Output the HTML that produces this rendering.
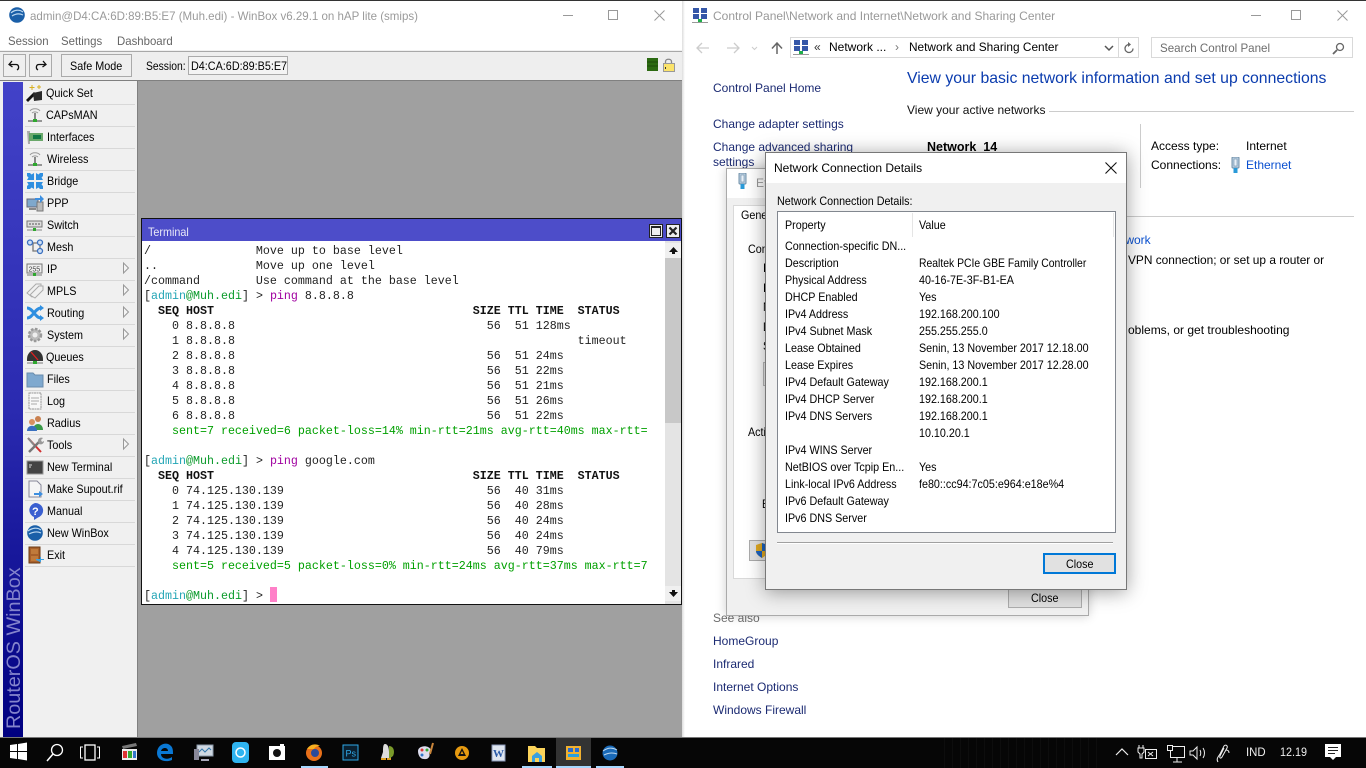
<!DOCTYPE html>
<html><head><meta charset="utf-8"><title>WinBox and Network and Sharing Center</title>
<style>
html,body{margin:0;padding:0;width:1366px;height:768px;overflow:hidden;background:#fff}
body{position:relative;font-family:"Liberation Sans",sans-serif;font-size:12px;color:#000}
.a{position:absolute}
.t{position:absolute;line-height:14px;white-space:nowrap;font-size:12px}
.n{transform:scaleX(.9);transform-origin:0 50%}
.mn{transform:scaleX(.95);transform-origin:0 50%}
.l{color:#1b2a72}
.d{transform:scaleX(.895);transform-origin:0 50%}
.a svg,svg.a{display:block}
.btn{position:absolute;box-sizing:border-box;border:1px solid #aaa;background:#efefef}
.sep{position:absolute;left:25px;width:110px;height:1px;background:#d8d8d8}
pre{margin:0;font-family:"Liberation Mono",monospace;font-size:11.667px;line-height:15px;color:#222}
.g{color:#00a000}.c{color:#22a5b5}.m{color:#a000a0}.e{color:#0a9a2a}.h{font-weight:bold;color:#111}
</style></head><body>

<!-- WINBOX WINDOW -->
<div class="a" style="left:0;top:0;width:1366px;height:1px;background:#333"></div>
<div class="a" style="left:0;top:1px;width:683px;height:49px;background:#fff"></div>
<svg class="a" style="left:9px;top:7px" width="16" height="16" viewBox="0 0 16 16"><circle cx="8" cy="8" r="7.8" fill="#1a5fa8"/><path d="M2 6c3-3 8-4 12-1M3 9c3-2 7-3 11-1" stroke="#bcd8f0" stroke-width="1.2" fill="none"/></svg>
<div class="t" style="left:30px;top:9px;color:#9a9a9a;transform:scaleX(.96);transform-origin:0 50%">admin@D4:CA:6D:89:B5:E7 (Muh.edi) - WinBox v6.29.1 on hAP lite (smips)</div>
<div class="a" style="left:563px;top:15px;width:10px;height:1px;background:#999"></div>
<div class="a" style="left:608px;top:10px;width:8px;height:8px;border:1px solid #999"></div>
<svg class="a" style="left:654px;top:10px" width="11" height="11"><path d="M.5.5l10 10M10.5.5l-10 10" stroke="#999"/></svg>
<div class="t mn" style="left:8px;top:34px;color:#666">Session</div>
<div class="t mn" style="left:61px;top:34px;color:#666">Settings</div>
<div class="t mn" style="left:117px;top:34px;color:#666">Dashboard</div>

<div class="a" style="left:0;top:50px;width:683px;height:1px;background:#f0f0f0"></div>
<div class="a" style="left:0;top:51px;width:683px;height:1px;background:#a8a8a8"></div>
<div class="a" style="left:0;top:52px;width:683px;height:28px;background:#eeeeee"></div>
<div class="a" style="left:0;top:80px;width:683px;height:1px;background:#808080"></div>

<div class="btn" style="left:3px;top:54px;width:23px;height:23px"></div>
<svg class="a" style="left:8px;top:60px" width="13" height="11" viewBox="0 0 13 11"><path d="M4 1L1 4.5 4.5 7M1.5 4.5H8c3 0 3.5 4 1 5.5" fill="none" stroke="#111" stroke-width="1.3"/></svg>
<div class="btn" style="left:29px;top:54px;width:23px;height:23px"></div>
<svg class="a" style="left:34px;top:60px" width="13" height="11" viewBox="0 0 13 11"><path d="M9 1l3 3.500L8.500 7M11.500 4.500H5c-3 0-3.500 4-1 5.500" fill="none" stroke="#111" stroke-width="1.3"/></svg>
<div class="btn" style="left:61px;top:54px;width:71px;height:23px"></div>
<div class="t n" style="left:70px;top:59px">Safe Mode</div>
<div class="t" style="left:146px;top:59px;transform:scaleX(.86);transform-origin:0 50%">Session:</div>
<div class="btn" style="left:188px;top:56px;width:100px;height:19px;background:#f4f4f4"></div>
<div class="t n" style="left:191px;top:59px">D4:CA:6D:89:B5:E7</div>
<svg class="a" style="left:647px;top:58px" width="30" height="14"><rect x="0" y="0" width="11" height="13" fill="#2c6a12"/><path d="M0 4h11M0 8h11" stroke="#1c4a0a"/><path d="M18.500 6V3.500c0-3 6-3 6 0V6" fill="none" stroke="#888" stroke-width="1.300"/><rect x="16.500" y="5.500" width="11" height="8" fill="#fbe36a" stroke="#999"/><rect x="18" y="9" width="1" height="2" fill="#333"/></svg>

<!-- sidebar -->
<div class="a" style="left:0;top:81px;width:138px;height:656px;background:#f0f0f0"></div>
<div class="a" style="left:137px;top:81px;width:1px;height:656px;background:#808080"></div>
<div class="a" style="left:3px;top:82px;width:20px;height:655px;background:linear-gradient(#4242c8,#2a2ab0 50%,#000080)"></div>
<div class="a" style="left:3px;top:82px;width:20px;height:650px;overflow:hidden">
 <div style="position:absolute;left:1px;bottom:3px;transform-origin:0 100%;transform:translateX(21px) rotate(-90deg);white-space:nowrap;font-size:19.800px;line-height:22px;color:#8484cc">RouterOS WinBox</div>
</div>

<div class="t n" style="left:46px;top:86px">Quick Set</div><div class="sep" style="top:104px"></div>
<div class="t n" style="left:46px;top:108px">CAPsMAN</div><div class="sep" style="top:126px"></div>
<div class="t n" style="left:47px;top:130px">Interfaces</div><div class="sep" style="top:148px"></div>
<div class="t n" style="left:47px;top:152px">Wireless</div><div class="sep" style="top:170px"></div>
<div class="t n" style="left:47px;top:174px">Bridge</div><div class="sep" style="top:192px"></div>
<div class="t n" style="left:47px;top:196px">PPP</div><div class="sep" style="top:214px"></div>
<div class="t n" style="left:47px;top:218px">Switch</div><div class="sep" style="top:236px"></div>
<div class="t n" style="left:47px;top:240px">Mesh</div><div class="sep" style="top:258px"></div>
<div class="t n" style="left:47px;top:262px">IP</div><div class="sep" style="top:280px"></div>
<div class="t n" style="left:47px;top:284px">MPLS</div><div class="sep" style="top:302px"></div>
<div class="t n" style="left:47px;top:306px">Routing</div><div class="sep" style="top:324px"></div>
<div class="t n" style="left:47px;top:328px">System</div><div class="sep" style="top:346px"></div>
<div class="t n" style="left:46px;top:350px">Queues</div><div class="sep" style="top:368px"></div>
<div class="t n" style="left:47px;top:372px">Files</div><div class="sep" style="top:390px"></div>
<div class="t n" style="left:47px;top:394px">Log</div><div class="sep" style="top:412px"></div>
<div class="t n" style="left:47px;top:416px">Radius</div><div class="sep" style="top:434px"></div>
<div class="t n" style="left:47px;top:438px">Tools</div><div class="sep" style="top:456px"></div>
<div class="t n" style="left:47px;top:460px">New Terminal</div><div class="sep" style="top:478px"></div>
<div class="t n" style="left:47px;top:482px">Make Supout.rif</div><div class="sep" style="top:500px"></div>
<div class="t n" style="left:47px;top:504px">Manual</div><div class="sep" style="top:522px"></div>
<div class="t n" style="left:47px;top:526px">New WinBox</div><div class="sep" style="top:544px"></div>
<div class="t n" style="left:47px;top:548px">Exit</div><div class="sep" style="top:566px"></div>

<svg class="a" style="left:26px;top:84px" width="18" height="484" viewBox="0 0 18 484">
 <!-- quick set --><path d="M1 17L9 9" stroke="#111" stroke-width="2.800"/><path d="M7 9l9-2v9l-8 1z" fill="#2a2a2a"/><path d="M6 1v5M3.500 3.500h5M13 1v4M11 3h4" stroke="#d8b020" stroke-width="1"/>
 <!-- capsman --><g transform="translate(0,22)"><path d="M4 5c2-3 8-3 10 0M6 7c1.500-1.500 4.500-1.500 6 0" stroke="#999" fill="none"/><path d="M9 7v7" stroke="#666" stroke-width="1.500"/><path d="M2 15h14" stroke="#777" stroke-width="1.500"/><rect x="7" y="13" width="4" height="3" fill="#2ea82e"/></g>
 <!-- interfaces --><g transform="translate(0,44)"><path d="M1 3h3v13H2z" fill="#aaa"/><rect x="3" y="5" width="14" height="8" fill="#6aa86a"/><rect x="7" y="7" width="8" height="4" fill="#174"/></g>
 <!-- wireless --><g transform="translate(0,66)"><path d="M4 5c2-3 8-3 10 0M6 7c1.500-1.500 4.500-1.500 6 0" stroke="#999" fill="none"/><path d="M9 7v7" stroke="#666" stroke-width="1.500"/><path d="M2 15h14" stroke="#777" stroke-width="1.500"/><rect x="7" y="13" width="4" height="3" fill="#2ea82e"/></g>
 <!-- bridge --><g transform="translate(1,89)" fill="#2f8fe0"><path d="M0 0h3l1.500 1.500L7 0v7H0l1.500-2.500L0 3z"/><path d="M16 0h-3l-1.500 1.500L9 0v7h7l-1.500-2.500L16 3z"/><path d="M0 16h3l1.500-1.500L7 16V9H0l1.500 2.500L0 13z"/><path d="M16 16h-3l-1.500-1.500L9 16V9h7l-1.500 2.500L16 13z"/></g>
 <!-- ppp --><g transform="translate(0,110)"><rect x="1" y="5" width="11" height="8" fill="#7fa8cc" stroke="#667"/><rect x="11" y="8" width="6" height="9" fill="#bbb" stroke="#777"/><path d="M9 4h5V1l4 4-4 4V6H9z" fill="#3d8fe0"/><path d="M3 15h7" stroke="#888" stroke-width="2"/></g>
 <!-- switch --><g transform="translate(0,132)"><rect x="1" y="5" width="15" height="6" fill="#ddd" stroke="#777"/><path d="M3 8h11" stroke="#555" stroke-dasharray="2 1"/><path d="M1 14h15" stroke="#888"/><rect x="7" y="12" width="3" height="3" fill="#2ea82e"/></g>
 <!-- mesh --><g transform="translate(0,154)" fill="#cfe0f5" stroke="#3a70c0" stroke-width="1.300"><path d="M4 5h10M14 5v8M7 5v8h7" fill="none" stroke="#777"/><circle cx="4" cy="4.500" r="2.500"/><circle cx="14" cy="4.500" r="2.500"/><circle cx="14" cy="13" r="2.500"/></g>
 <!-- ip --><g transform="translate(0,176)"><rect x="1" y="4" width="15" height="9" fill="#eee" stroke="#777"/><text x="2.500" y="11.500" font-size="7" font-family="Liberation Sans" fill="#444">255</text><path d="M1 15h15" stroke="#777"/><rect x="7" y="13" width="3" height="3" fill="#2ea82e"/></g>
 <!-- mpls --><g transform="translate(0,198)" fill="#f0f0f0" stroke="#aaa"><path d="M1 11l9-9h5v4l-9 9z"/><path d="M4 13l9-9h4v4l-8 8z"/></g>
 <!-- routing --><g transform="translate(0,220)" stroke="#2f8fe0" stroke-width="3" fill="none"><path d="M1 14c6 0 8-10 14-10M1 4c6 0 8 10 14 10"/></g><path d="M14 221l4 3-4 3zM14 231l4 3-4 3z" fill="#2f8fe0"/>
 <!-- system --><g transform="translate(0,242)"><circle cx="9" cy="9" r="6" fill="#bbb" stroke="#999" stroke-width="2.500" stroke-dasharray="2.500 1.500"/><circle cx="9" cy="9" r="2.500" fill="#eee"/></g>
 <!-- queues --><g transform="translate(0,264)"><path d="M1 11a8 9 0 0 1 16 0v2H1z" fill="#333"/><path d="M5 4l7 8" stroke="#e02020" stroke-width="1.300"/><path d="M1 15h16" stroke="#777"/><rect x="7" y="13" width="4" height="3" fill="#2ea82e"/></g>
 <!-- files --><g transform="translate(0,286)"><path d="M1 3h6l2 2h8v12H1z" fill="#7fa9cf" stroke="#6a8cac"/></g>
 <!-- log --><g transform="translate(0,308)"><rect x="3" y="1" width="12" height="16" fill="#f8f8f8" stroke="#999" stroke-dasharray="2 .500"/><path d="M5 6h8M5 9h8M5 12h6" stroke="#aaa"/></g>
 <!-- radius --><g transform="translate(0,330)"><circle cx="12" cy="5" r="3" fill="#c98050"/><path d="M7 16c0-8 10-8 10 0z" fill="#3a9a4a"/><circle cx="6" cy="8" r="3" fill="#d89060"/><path d="M1 17c0-7 10-7 10 0z" fill="#3a70c0"/></g>
 <!-- tools --><g transform="translate(0,352)"><path d="M2 2l13 14" stroke="#d03030" stroke-width="2"/><path d="M2 2l6 7" stroke="#888" stroke-width="2"/><path d="M3 16L13 6" stroke="#777" stroke-width="2.500"/><path d="M12 5c0-3 3-4 5-3l-2 2 1 2 2-1c0 3-3 4-5 3z" fill="#999"/></g>
 <!-- new terminal --><g transform="translate(0,374)"><rect x="1" y="3" width="16" height="13" fill="#444" stroke="#999"/><path d="M3 7h3M3 9h2" stroke="#ddd"/></g>
 <!-- supout --><g transform="translate(0,396)"><path d="M3 1h8l4 4v12H3z" fill="#f5f5f5" stroke="#889"/><path d="M8 13h5v-2l4 3-4 3v-2H8z" fill="#3d8fe0"/></g>
 <!-- manual --><g transform="translate(0,418)"><path d="M9 1a8 7.500 0 0 1 3 14.500L8 18v-3A8 7.500 0 0 1 9 1z" fill="#3a5fd0"/><text x="6" y="13" font-size="11" font-weight="bold" font-family="Liberation Sans" fill="#fff">?</text></g>
 <!-- winbox --><g transform="translate(0,440)"><circle cx="9" cy="9" r="7.800" fill="#1a5fa8"/><path d="M2 7c4-3 9-4 13-1M3 10c4-2 8-3 12-1" stroke="#bcd8f0" stroke-width="1.200" fill="none"/></g>
 <!-- exit --><g transform="translate(0,462)"><rect x="3" y="1" width="11" height="16" fill="#a8602a" stroke="#6a3a14"/><rect x="5" y="3" width="7" height="5" fill="#c07a3a"/><rect x="5" y="10" width="7" height="5" fill="#c07a3a"/><path d="M10 13h4v-2h1v2h3v1h-3v2h-1l-4-2z" fill="#3d9fe0"/></g>
</svg>
<svg class="a" style="left:123px;top:262px" width="7" height="192" viewBox="0 0 7 192" fill="#f4f4f4" stroke="#999"><path d="M.5 1v10l5-5zM.5 23v10l5-5zM.5 45v10l5-5zM.5 67v10l5-5zM.5 177v10l5-5z"/></svg>

<!-- work area -->
<div class="a" style="left:138px;top:81px;width:545px;height:656px;background:#a0a0a0"></div>
<div class="a" style="left:682px;top:1px;width:3px;height:737px;background:linear-gradient(90deg,#ddd,#fff)"></div>

<!-- TERMINAL -->
<div class="a" style="left:141px;top:218px;width:541px;height:387px;background:#111"></div>
<div class="a" style="left:142px;top:219px;width:539px;height:22px;background:#4d4dc9"></div>
<div class="t n" style="left:148px;top:225px;color:#e8e8f8">Terminal</div>
<div class="a" style="left:649px;top:224px;width:14px;height:14px;box-sizing:border-box;background:#eee;border:1px solid #222"></div>
<div class="a" style="left:651px;top:226px;width:10px;height:10px;box-sizing:border-box;border:1px solid #222;border-top-width:2px"></div>
<div class="a" style="left:666px;top:224px;width:14px;height:14px;box-sizing:border-box;background:#eee;border:1px solid #222"></div>
<svg class="a" style="left:668px;top:226px" width="10" height="10"><path d="M1.500 1.500l7 7M8.500 1.500l-7 7" stroke="#222" stroke-width="2.200"/></svg>
<div class="a" style="left:142px;top:241px;width:539px;height:363px;background:#fff"></div>
<div class="a" style="left:665px;top:241px;width:16px;height:363px;background:#e4e4e4"></div>
<div class="a" style="left:665px;top:258px;width:16px;height:165px;background:#c8c8c8"></div>
<div class="a" style="left:665px;top:243px;width:16px;height:15px;background:#f0f0f0"></div>
<svg class="a" style="left:669px;top:247px" width="9" height="7"><path d="M4.500 0L9 5H6v2H3V5H0z" fill="#111"/></svg>
<div class="a" style="left:665px;top:586px;width:16px;height:15px;background:#f0f0f0"></div>
<svg class="a" style="left:669px;top:590px" width="9" height="7"><path d="M4.500 7L9 2H6V0H3v2H0z" fill="#111"/></svg>
<div class="a" style="left:143px;top:244px;width:522px;height:359px;overflow:hidden">
<pre style="padding-left:1px">/               Move up to base level
..              Move up one level
/command        Use command at the base level
[<span class="c">admin</span><span class="e">@Muh.edi</span>] &gt; <span class="m">ping</span> 8.8.8.8
<span class="h">  SEQ HOST                                     SIZE TTL TIME  STATUS</span>
    0 8.8.8.8                                    56  51 128ms
    1 8.8.8.8                                                 timeout
    2 8.8.8.8                                    56  51 24ms
    3 8.8.8.8                                    56  51 22ms
    4 8.8.8.8                                    56  51 21ms
    5 8.8.8.8                                    56  51 26ms
    6 8.8.8.8                                    56  51 22ms
<span class="g">    sent=7 received=6 packet-loss=14% min-rtt=21ms avg-rtt=40ms max-rtt=</span>

[<span class="c">admin</span><span class="e">@Muh.edi</span>] &gt; <span class="m">ping</span> google.com
<span class="h">  SEQ HOST                                     SIZE TTL TIME  STATUS</span>
    0 74.125.130.139                             56  40 31ms
    1 74.125.130.139                             56  40 28ms
    2 74.125.130.139                             56  40 24ms
    3 74.125.130.139                             56  40 24ms
    4 74.125.130.139                             56  40 79ms
<span class="g">    sent=5 received=5 packet-loss=0% min-rtt=24ms avg-rtt=37ms max-rtt=7</span>

[<span class="c">admin</span><span class="e">@Muh.edi</span>] &gt; </pre>
</div>
<div class="a" style="left:270px;top:587px;width:7px;height:15px;background:#ff80c8"></div>

<!-- CONTROL PANEL WINDOW -->
<svg class="a" style="left:692px;top:7px" width="16" height="17" viewBox="0 0 16 17"><rect x="1" y="1" width="6" height="5" fill="#3557a8"/><rect x="9" y="1" width="6" height="5" fill="#3557a8"/><rect x="1" y="7" width="6" height="5" fill="#3557a8"/><rect x="9" y="7" width="6" height="5" fill="#3557a8"/><rect x="6" y="12" width="4" height="3" fill="#1fae4a"/><path d="M0 15.500h16" stroke="#999"/></svg>
<div class="t" style="left:713px;top:9px;color:#999">Control Panel\Network and Internet\Network and Sharing Center</div>
<div class="a" style="left:1251px;top:15px;width:10px;height:1px;background:#999"></div>
<div class="a" style="left:1291px;top:10px;width:8px;height:8px;border:1px solid #999"></div>
<svg class="a" style="left:1337px;top:10px" width="11" height="11"><path d="M.5.5l10 10M10.500.5l-10 10" stroke="#999"/></svg>
<svg class="a" style="left:696px;top:42px" width="90" height="12" fill="none"><path d="M1 6h12M6 1L1 6l5 5" stroke="#ccc" stroke-width="1.300"/><path d="M31 6h12M38 1l5 5-5 5" stroke="#ccc" stroke-width="1.300"/><path d="M56 5l2.500 2.500L61 5" stroke="#ccc"/><path d="M81 12V2M76 6.500L81 1l5 5.500" stroke="#666" stroke-width="1.500"/></svg>
<div class="a" style="left:790px;top:37px;width:349px;height:21px;box-sizing:border-box;border:1px solid #d9d9d9"></div>
<svg class="a" style="left:793px;top:39px" width="16" height="17" viewBox="0 0 16 17"><rect x="1" y="1" width="6" height="5" fill="#3557a8"/><rect x="9" y="1" width="6" height="5" fill="#3557a8"/><rect x="1" y="7" width="6" height="5" fill="#3557a8"/><rect x="9" y="7" width="6" height="5" fill="#3557a8"/><rect x="6" y="12" width="4" height="3" fill="#1fae4a"/><path d="M0 15.500h16" stroke="#999"/></svg>
<div class="t" style="left:814px;top:40px;color:#333">«</div>
<div class="t" style="left:829px;top:40px">Network ...</div>
<div class="t" style="left:895px;top:40px;color:#777">›</div>
<div class="t" style="left:909px;top:40px;transform:scaleX(.987);transform-origin:0 50%">Network and Sharing Center</div>
<svg class="a" style="left:1104px;top:45px" width="10" height="7"><path d="M1 1l4 4 4-4" stroke="#555" stroke-width="1.500" fill="none"/></svg>
<div class="a" style="left:1118px;top:38px;width:1px;height:19px;background:#d9d9d9"></div>
<svg class="a" style="left:1123px;top:42px" width="12" height="12"><path d="M6 2.500a4 4 0 1 0 4 4" stroke="#666" stroke-width="1.300" fill="none"/><path d="M5 0l3 2.500L5 5z" fill="#666"/></svg>
<div class="a" style="left:1151px;top:37px;width:202px;height:21px;box-sizing:border-box;border:1px solid #d9d9d9"></div>
<div class="t" style="left:1160px;top:41px;color:#6d6d6d;transform:scaleX(.965);transform-origin:0 50%">Search Control Panel</div>
<svg class="a" style="left:1332px;top:42px" width="13" height="13"><circle cx="8" cy="5" r="3.500" stroke="#666" stroke-width="1.300" fill="none"/><path d="M5 8l-4 4" stroke="#666" stroke-width="1.800"/></svg>

<div class="t" style="left:907px;top:69px;font-size:15.800px;line-height:19px;color:#0b3cae">View your basic network information and set up connections</div>
<div class="t" style="left:907px;top:103px;color:#111">View your active networks</div>
<div class="a" style="left:1049px;top:111px;width:305px;height:1px;background:#ccc"></div>
<div class="t l" style="left:713px;top:81px">Control Panel Home</div>
<div class="t l" style="left:713px;top:117px">Change adapter settings</div>
<div class="t l" style="left:713px;top:140px">Change advanced sharing</div>
<div class="t l" style="left:713px;top:155px">settings</div>
<div class="t" style="left:927px;top:140px;font-weight:bold;font-size:12.500px">Network&nbsp; 14</div>
<div class="a" style="left:1140px;top:124px;width:1px;height:64px;background:#ccc"></div>
<div class="t" style="left:1151px;top:139px">Access type:</div>
<div class="t" style="left:1246px;top:139px">Internet</div>
<div class="t" style="left:1151px;top:158px">Connections:</div>
<svg class="a" style="left:1230px;top:157px" width="11" height="17" viewBox="0 0 11 17"><rect x="2" y="0" width="7" height="11" rx="1" fill="#b8cde0" stroke="#7090a8"/><rect x="4" y="2" width="3" height="7" fill="#e8f0f8" stroke="#7090a8" stroke-width=".6"/><rect x="3.500" y="11" width="4" height="5" fill="#2a9ad8"/></svg>
<div class="t" style="left:1246px;top:158px;color:#0a50d0">Ethernet</div>
<div class="a" style="left:1120px;top:216px;width:234px;height:1px;background:#ccc"></div>
<div class="t" style="left:1122px;top:233px;color:#0a50d0">twork</div>
<div class="t" style="left:1128px;top:253px;transform:scaleX(.99);transform-origin:0 50%">VPN connection; or set up a router or</div>
<div class="t" style="left:1128px;top:323px">oblems, or get troubleshooting</div>
<div class="t" style="left:713px;top:611px;color:#6d6d6d">See also</div>
<div class="t l" style="left:713px;top:634px">HomeGroup</div>
<div class="t l" style="left:713px;top:657px">Infrared</div>
<div class="t l" style="left:713px;top:680px">Internet Options</div>
<div class="t l" style="left:713px;top:703px">Windows Firewall</div>

<!-- ETHERNET STATUS DIALOG -->
<div class="a" style="left:726px;top:168px;width:363px;height:448px;box-sizing:border-box;background:#f0f0f0;border:1px solid #aaa;box-shadow:0 0 10px rgba(0,0,0,.2)"></div>
<div class="a" style="left:727px;top:169px;width:361px;height:29px;background:#fff"></div>
<svg class="a" style="left:737px;top:173px" width="11" height="17" viewBox="0 0 11 17"><rect x="2" y="0" width="7" height="11" rx="1" fill="#b8cde0" stroke="#7090a8"/><rect x="4" y="2" width="3" height="7" fill="#e8f0f8" stroke="#7090a8" stroke-width=".6"/><rect x="3.500" y="11" width="4" height="5" fill="#2a9ad8"/></svg>
<div class="t" style="left:756px;top:176px;color:#999">Et</div>
<div class="a" style="left:733px;top:228px;width:349px;height:351px;box-sizing:border-box;background:#fff;border:1px solid #d9d9d9"></div>
<div class="a" style="left:733px;top:205px;width:45px;height:24px;box-sizing:border-box;background:#fff;border:1px solid #d9d9d9;border-bottom:none"></div>
<div class="t d" style="left:741px;top:208px">Gene</div>
<div class="t d" style="left:748px;top:242px">Conn</div>
<div class="t d" style="left:763px;top:261px">I</div>
<div class="t d" style="left:763px;top:281px">I</div>
<div class="t d" style="left:763px;top:300px">M</div>
<div class="t d" style="left:763px;top:320px">D</div>
<div class="t d" style="left:763px;top:339px">S</div>
<div class="a" style="left:763px;top:362px;width:20px;height:24px;box-sizing:border-box;border:1px solid #bbb;background:#eee"></div>
<div class="t d" style="left:748px;top:425px">Activ</div>
<div class="t d" style="left:762px;top:497px">B</div>
<div class="a" style="left:749px;top:540px;width:40px;height:21px;box-sizing:border-box;border:1px solid #aaa;background:#e1e1e1"></div>
<svg class="a" style="left:756px;top:543px" width="12" height="15" viewBox="0 0 12 15"><path d="M6 0l6 2v6c0 3-3 5-6 7-3-2-6-4-6-7V2z" fill="#e0a820"/><path d="M6 0l6 2v6H6zM6 8v7c-3-2-6-4-6-7z" fill="#1c62c0"/></svg>
<div class="a" style="left:1008px;top:588px;width:74px;height:20px;box-sizing:border-box;border:1px solid #adadad;background:#e1e1e1"></div>
<div class="t d" style="left:1031px;top:591px">Close</div>

<!-- NETWORK CONNECTION DETAILS DIALOG -->
<div class="a" style="left:765px;top:152px;width:362px;height:438px;box-sizing:border-box;background:#f0f0f0;border:1px solid #777;box-shadow:0 2px 18px rgba(0,0,0,.38)"></div>
<div class="a" style="left:766px;top:153px;width:360px;height:30px;background:#fff"></div>
<div class="t" style="left:774px;top:161px">Network Connection Details</div>
<svg class="a" style="left:1105px;top:162px" width="12" height="12"><path d="M.5.5l11 11M11.500.5l-11 11" stroke="#111" stroke-width="1.100"/></svg>
<div class="t d" style="left:777px;top:194px">Network Connection Details:</div>
<div class="a" style="left:777px;top:211px;width:339px;height:322px;box-sizing:border-box;background:#fff;border:1px solid #82878f"></div>
<div class="a" style="left:912px;top:213px;width:1px;height:24px;background:#e5e5e5"></div>
<div class="a" style="left:1113px;top:213px;width:1px;height:24px;background:#e5e5e5"></div>
<div class="t d" style="left:785px;top:218px">Property</div>
<div class="t d" style="left:919px;top:218px">Value</div>
<div class="t d" style="left:785px;top:239px">Connection-specific DN...</div>
<div class="t d" style="left:785px;top:256px">Description</div><div class="t" style="left:919px;top:256px;transform:scaleX(.865);transform-origin:0 50%">Realtek PCIe GBE Family Controller</div>
<div class="t d" style="left:785px;top:273px">Physical Address</div><div class="t d" style="left:919px;top:273px">40-16-7E-3F-B1-EA</div>
<div class="t d" style="left:785px;top:290px">DHCP Enabled</div><div class="t d" style="left:919px;top:290px">Yes</div>
<div class="t d" style="left:785px;top:307px">IPv4 Address</div><div class="t d" style="left:919px;top:307px">192.168.200.100</div>
<div class="t d" style="left:785px;top:324px">IPv4 Subnet Mask</div><div class="t d" style="left:919px;top:324px">255.255.255.0</div>
<div class="t d" style="left:785px;top:341px">Lease Obtained</div><div class="t d" style="left:919px;top:341px">Senin, 13 November 2017 12.18.00</div>
<div class="t d" style="left:785px;top:358px">Lease Expires</div><div class="t d" style="left:919px;top:358px">Senin, 13 November 2017 12.28.00</div>
<div class="t d" style="left:785px;top:375px">IPv4 Default Gateway</div><div class="t d" style="left:919px;top:375px">192.168.200.1</div>
<div class="t d" style="left:785px;top:392px">IPv4 DHCP Server</div><div class="t d" style="left:919px;top:392px">192.168.200.1</div>
<div class="t d" style="left:785px;top:409px">IPv4 DNS Servers</div><div class="t d" style="left:919px;top:409px">192.168.200.1</div>
<div class="t d" style="left:919px;top:426px">10.10.20.1</div>
<div class="t d" style="left:785px;top:443px">IPv4 WINS Server</div>
<div class="t d" style="left:785px;top:460px">NetBIOS over Tcpip En...</div><div class="t d" style="left:919px;top:460px">Yes</div>
<div class="t d" style="left:785px;top:477px">Link-local IPv6 Address</div><div class="t d" style="left:919px;top:477px">fe80::cc94:7c05:e964:e18e%4</div>
<div class="t d" style="left:785px;top:494px">IPv6 Default Gateway</div>
<div class="t d" style="left:785px;top:511px">IPv6 DNS Server</div>
<div class="a" style="left:777px;top:542px;width:336px;height:1px;background:#a0a0a0"></div>
<div class="a" style="left:777px;top:543px;width:336px;height:1px;background:#fff"></div>
<div class="a" style="left:1043px;top:553px;width:73px;height:21px;box-sizing:border-box;border:2px solid #0078d7;background:#e1e1e1"></div>
<div class="t d" style="left:1066px;top:557px">Close</div>

<!-- TASKBAR -->
<div class="a" style="left:0;top:737px;width:1366px;height:1px;background:#777"></div>
<div class="a" style="left:0;top:738px;width:1366px;height:30px;background:#060606"></div>
<div class="a" style="left:944px;top:738px;width:155px;height:30px;background:repeating-linear-gradient(90deg,#0d0d0d 0 1px,#060606 1px 8px)"></div>
<div class="a" style="left:556px;top:738px;width:35px;height:30px;background:#333"></div>
<div class="a" style="left:301px;top:766px;width:27px;height:2px;background:#a6d8ff"></div>
<div class="a" style="left:522px;top:766px;width:30px;height:2px;background:#a6d8ff"></div>
<div class="a" style="left:556px;top:766px;width:35px;height:2px;background:#a6d8ff"></div>
<div class="a" style="left:596px;top:766px;width:28px;height:2px;background:#a6d8ff"></div>

<svg class="a" style="left:0;top:738px" width="640" height="30" viewBox="0 0 640 30">
 <path d="M10 7l7-1v7h-7zM18 6l9-1.500V13h-9zM10 14h7v7l-7-1zM18 14h9v8.500l-9-1.500z" fill="#fff"/>
 <circle cx="57" cy="12" r="5.500" fill="none" stroke="#fff" stroke-width="1.300"/><path d="M53 16l-6 7" stroke="#fff" stroke-width="1.500"/>
 <path d="M83 9h-2.500v11H83M97 9h2.500v11H97" stroke="#fff" fill="none"/><rect x="85" y="7" width="10" height="15" fill="none" stroke="#fff" stroke-width="1.300"/>
 <rect x="122" y="11" width="15" height="11" fill="#eee"/><path d="M122 8l14-3 1 3-14 3z" fill="#777"/><rect x="123" y="13" width="4" height="7" fill="#d33"/><rect x="128" y="13" width="4" height="7" fill="#3a3"/><rect x="133" y="13" width="3" height="7" fill="#37c"/>
 <path d="M173 16h-12c0 5 7 6 11 3v3c-7 3-15 0-15-7 0-9 10-12 14-7 2 2 2 5 2 8zM161 13h7c0-4-6-4-7 0z" fill="#0a78d4"/>
 <rect x="197" y="7" width="16" height="11" fill="#cfd8e2" stroke="#8a98a8"/><path d="M199 14l3-3 3 3 4-4 2 2" stroke="#37a" fill="none"/><rect x="194" y="11" width="5" height="11" fill="#889"/><path d="M201 22h8" stroke="#aab" stroke-width="2"/>
 <rect x="232" y="4" width="17" height="21" rx="4" fill="#2fb4f0"/><circle cx="240.500" cy="14.500" r="4.500" fill="none" stroke="#fff" stroke-width="1.500"/>
 <rect x="269" y="8" width="16" height="14" fill="#fff"/><circle cx="277" cy="15" r="4" fill="#111"/><rect x="280" y="6" width="4" height="3" fill="#fff"/>
 <circle cx="314" cy="15" r="8" fill="#e8701a"/><circle cx="315" cy="15" r="4" fill="#2a4a9a"/><path d="M307 11c3-5 9-6 13-3-3 0-5 1-6 3z" fill="#f8b020"/>
 <rect x="343" y="7" width="15" height="15" fill="#0a2030" stroke="#2fa8e8"/><text x="345.500" y="18.500" font-size="9" font-family="Liberation Sans" fill="#2fa8e8">Ps</text>
 <path d="M385 6c3 0 4 4 4 8l2 6h-10l2-6c0-4 0-8 2-8z" fill="#ddd"/><path d="M389 8c5 0 6 6 4 10l-4 3z" fill="#7a9a2a"/><path d="M381 21h5M387 21h4" stroke="#e0a020" stroke-width="2"/>
 <path d="M418 13c0-4 6-6 10-4 4 2 3 5 1 6 2 3-1 7-5 6-4 0-6-4-6-8z" fill="#dde"/><circle cx="422" cy="12" r="1.500" fill="#d33"/><circle cx="427" cy="12" r="1.500" fill="#3a3"/><circle cx="422" cy="17" r="1.500" fill="#37c"/><path d="M430 16l3-11" stroke="#c9853a" stroke-width="2"/>
 <circle cx="462" cy="15" r="7" fill="#e69a10"/><path d="M462 10l-4 8h8z" fill="#111"/><path d="M462 13l-1.500 3h3z" fill="#e69a10"/>
 <rect x="492" y="7" width="13" height="16" fill="#dfe6f0" stroke="#8a98b8"/><text x="493" y="19" font-size="11" font-weight="bold" font-family="Liberation Serif" fill="#2a5aa8">W</text>
 <path d="M528 8h7l2 2h8v14h-17z" fill="#fbd35a"/><path d="M532 24v-6l5-4 5 4v6h-3v-4h-4v4z" fill="#3aa0e0"/>
 <rect x="566" y="8" width="15" height="14" fill="#f0b030"/><rect x="568" y="10" width="5" height="4" fill="#2a6ad0"/><rect x="575" y="10" width="4" height="4" fill="#2a6ad0"/><rect x="568" y="16" width="11" height="3" fill="#2aa0e0"/>
 <circle cx="610" cy="15" r="7.500" fill="#1a6ab8"/><path d="M603 13c4-3 9-4 14-1M604 17c4-2 8-3 13-1" stroke="#bcd8f0" fill="none"/>
</svg>
<svg class="a" style="left:1110px;top:738px" width="240" height="30" viewBox="0 0 240 30" fill="none" stroke="#eee">
 <path d="M6 17l6-6 6 6" stroke-width="1.200"/>
 <path d="M29 7v3M33 7v3M28 10h6v4l-2 2v4h-2v-4l-2-2z"/><rect x="35.500" y="11.500" width="11" height="9"/><path d="M38 14l5 4M43 14l-5 4"/>
 <rect x="60.500" y="8.500" width="14" height="11"/><rect x="57.500" y="7.500" width="5" height="5" fill="#060606"/><path d="M67 20v4M63 24h9"/>
 <path d="M80 13h3l4-4v12l-4-4h-3zM90 12c1 2 1 4 0 6M93 10c2 3 2 7 0 10"/>
 <path d="M108 24c-2-3 0-5 2-8l4-8c2-2 4 0 3 2l-5 9c-1 2-3 1-2-1l4-8M116 12c2 0 3 1 3 3"/>
</svg>
<div class="t" style="left:1246px;top:745px;color:#eee;transform:scaleX(.95);transform-origin:0 50%">IND</div>
<div class="t" style="left:1280px;top:745px;color:#eee;transform:scaleX(.9);transform-origin:0 50%">12.19</div>
<svg class="a" style="left:1325px;top:744px" width="17" height="18"><path d="M0 0h16v13h-5l-3 3-3-3H0z" fill="#fff"/><path d="M3 3.500h10M3 6.500h10M3 9.500h7" stroke="#222"/></svg>
</body></html>
